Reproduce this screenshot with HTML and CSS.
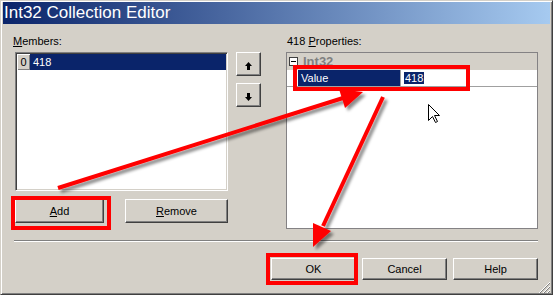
FILE: index.html
```html
<!DOCTYPE html>
<html lang="en">
<head>
    <meta charset="UTF-8">
    <meta name="viewport" content="width=device-width, initial-scale=1.0">
    <title>Int32 Collection Editor</title>
    <link rel="stylesheet" href="styles.css">
</head>
<body>
    <div class="window">
        <div class="titlebar">Int32 Collection Editor</div>
        <div class="content">
            <div class="panes">
                <div class="members">
                    <div class="label members-label"><u>M</u>embers:</div>
                    <div class="members-row">
                        <div class="listbox">
                            <div class="list-item">
                                <span class="index">0</span>
                                <span class="item-text">418</span>
                            </div>
                        </div>
                        <div class="updown">
                            <button class="btn arrow-btn">
                                <svg width="7" height="8" viewBox="0 0 7 8"><path d="M3.5 0 L7 4 L0 4 Z" fill="#000"/><rect x="2" y="4" width="3" height="4" fill="#000"/></svg>
                            </button>
                            <button class="btn arrow-btn">
                                <svg width="7" height="8" viewBox="0 0 7 8"><rect x="2" y="0" width="3" height="4" fill="#000"/><path d="M0 4 L7 4 L3.5 8 Z" fill="#000"/></svg>
                            </button>
                        </div>
                    </div>
                    <div class="member-buttons">
                        <button class="btn add-btn"><u>A</u>dd</button>
                        <button class="btn remove-btn"><u>R</u>emove</button>
                    </div>
                </div>
                <div class="properties">
                    <div class="label props-label">418 <u>P</u>roperties:</div>
                    <div class="propgrid">
                        <div class="category"><span class="toggle"></span>Int32</div>
                        <div class="prop-row">
                            <div class="prop-name">Value</div>
                            <div class="prop-value"><span class="value-sel">418</span></div>
                        </div>
                    </div>
                </div>
            </div>
            <div class="separator"></div>
            <div class="footer">
                <button class="btn dlg-btn">OK</button>
                <button class="btn dlg-btn">Cancel</button>
                <button class="btn dlg-btn">Help</button>
            </div>
        </div>

        <!-- annotation layer: red boxes, arrows, pointer, size grip -->
        <svg class="overlay" width="553" height="295" viewBox="0 0 553 295">
            <defs>
                <filter id="shadow" x="-20%" y="-20%" width="140%" height="140%">
                    <feDropShadow dx="3" dy="3" stdDeviation="1.5" flood-color="#000" flood-opacity="0.45"/>
                </filter>
            </defs>
            <g fill="none" stroke="#ff0000" stroke-width="4">
                <rect x="295" y="67" width="173" height="22"/>
                <rect x="13" y="198" width="96" height="30"/>
                <rect x="268" y="255" width="88" height="28"/>
            </g>
            <g filter="url(#shadow)">
                <line x1="58" y1="188" x2="343" y2="98" stroke="#ff0000" stroke-width="4"/>
                <polygon points="363,92 345,108 339,89" fill="#ff0000"/>
                <line x1="383" y1="97" x2="323" y2="226" stroke="#ff0000" stroke-width="4"/>
                <polygon points="313,247 331,231 313,223" fill="#ff0000"/>
            </g>
            <path d="M428.5 104.5 L428.5 120.5 L432.5 116.5 L435.5 122.5 L437.5 121.5 L434.5 115.5 L439.5 115.5 Z" fill="#fff" stroke="#000" stroke-width="1"/>
            <g stroke-width="1">
                <line x1="550" y1="282" x2="539" y2="293" stroke="#fff"/>
                <line x1="550" y1="283" x2="540" y2="293" stroke="#808080"/>
                <line x1="550" y1="286" x2="543" y2="293" stroke="#fff"/>
                <line x1="550" y1="287" x2="544" y2="293" stroke="#808080"/>
                <line x1="550" y1="290" x2="547" y2="293" stroke="#fff"/>
                <line x1="550" y1="291" x2="548" y2="293" stroke="#808080"/>
            </g>
        </svg>
    </div>
</body>
</html>
```

FILE: styles.css
```css
* {
    margin: 0;
    padding: 0;
    box-sizing: border-box;
}
body {
    background: #d4d0c8;
    font-family: "Liberation Sans", Arial, sans-serif;
    font-size: 11px;
    color: #000;
}
.window {
    position: relative;
    width: 553px;
    height: 295px;
    background: #d4d0c8;
    border: 1px solid;
    border-color: #d4d0c8 #404040 #404040 #d4d0c8;
    box-shadow: inset 1px 1px #fff, inset -1px -1px #808080;
    padding: 1px 2px 2px 2px;
}
.titlebar {
    height: 22px;
    line-height: 22px;
    padding-left: 1px;
    font-size: 17px;
    color: #fff;
    background: linear-gradient(to right, #0a246a, #a6caf0);
    white-space: nowrap;
}
.content {
    padding: 11px 12px 0 12px;
}
.panes {
    display: flex;
    gap: 25px;
}
.members {
    width: 246px;
}
.properties {
    width: 252px;
}
.label {
    line-height: 13px;
    margin-bottom: 4px;
}
.members-label {
    margin-left: -2px;
}
.props-label {
    margin-left: 1px;
}
.members-row {
    display: flex;
    gap: 8px;
}
.listbox {
    width: 213px;
    height: 139px;
    background: #fff;
    border: 1px solid;
    border-color: #808080 #fff #fff #808080;
    box-shadow: inset 1px 1px #404040, inset -1px -1px #d4d0c8;
    padding: 1px;
}
.list-item {
    display: flex;
    height: 16px;
    line-height: 16px;
}
.index {
    width: 13px;
    text-align: center;
    background: #d4d0c8;
    box-shadow: inset 1px 1px #fff, inset -1px -1px #808080;
}
.item-text {
    flex: 1;
    background: #0a246a;
    color: #fff;
    padding-left: 3px;
}
.btn {
    font-family: "Liberation Sans", Arial, sans-serif;
    font-size: 11px;
    color: #000;
    background: #d4d0c8;
    border: 1px solid;
    border-color: #fff #404040 #404040 #fff;
    box-shadow: inset -1px -1px #808080;
    display: flex;
    align-items: center;
    justify-content: center;
}
.updown {
    display: flex;
    flex-direction: column;
    gap: 7px;
}
.arrow-btn {
    width: 25px;
    height: 24px;
    padding-top: 3px;
}
.member-buttons {
    display: flex;
    gap: 21px;
    margin-top: 8px;
}
.add-btn {
    width: 89px;
    height: 24px;
}
.remove-btn {
    width: 103px;
    height: 24px;
}
.propgrid {
    height: 177px;
    background: #fff;
    border: 1px solid #848284;
}
.category {
    display: flex;
    align-items: center;
    height: 17px;
    background: #d4d0c8;
    color: #808080;
    font-size: 13px;
    font-weight: bold;
}
.toggle {
    width: 9px;
    height: 9px;
    margin: 0 5px 0 2px;
    border: 1px solid #404040;
    background: linear-gradient(#000, #000) center / 5px 1px no-repeat #fff;
}
.prop-row {
    display: flex;
    height: 17px;
    line-height: 16px;
    padding-left: 11px;
    border-bottom: 1px solid #a0a0a0;
}
.prop-name {
    width: 103px;
    background: #0a246a;
    color: #fff;
    padding-left: 3px;
    border-right: 1px solid #a0a0a0;
}
.prop-value {
    padding-left: 3px;
}
.value-sel {
    background: #0a246a;
    color: #fff;
    padding: 0 1px;
}
.separator {
    height: 2px;
    margin: 11px 0 0 -1px;
    border-top: 1px solid #808080;
    border-bottom: 1px solid #fff;
}
.footer {
    display: flex;
    justify-content: flex-end;
    gap: 6px;
    margin-top: 16px;
}
.dlg-btn {
    width: 85px;
    height: 22px;
}
.overlay {
    position: absolute;
    top: -1px;
    left: -1px;
    pointer-events: none;
}
```
